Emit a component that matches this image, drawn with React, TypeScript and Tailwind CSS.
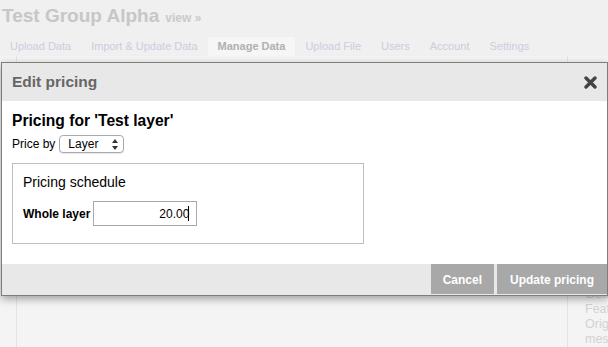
const tabs = [
  { label: "Upload Data", active: false },
  { label: "Import & Update Data", active: false },
  { label: "Manage Data", active: true },
  { label: "Upload File", active: false },
  { label: "Users", active: false },
  { label: "Account", active: false },
  { label: "Settings", active: false },
];

function PageBehind() {
  return (
    <div className="flex h-full flex-col bg-[#eff0ef]">
      <div className="flex items-baseline gap-[6px] pl-[2px] pt-[4px]">
        <h1 className="text-[19px] font-bold leading-[24px] text-[#c6c7c6]">Test Group Alpha</h1>
        <span className="text-[12px] font-bold text-[#c9cac9]">view »</span>
      </div>
      <div className="mt-[9px] flex h-[23px] items-stretch text-[11px]">
        {tabs.map((t) => (
          <div
            key={t.label}
            className={
              t.active
                ? "flex items-center bg-[#f5f6f5] px-[10px] font-bold text-[#b0b1b0]"
                : "flex items-center px-[10px] text-[#cdcde0]"
            }
          >
            {t.label}
          </div>
        ))}
      </div>
      <div className="flex flex-1 bg-[#f3f4f3]">
        <div className="w-[17px] border-r border-[#e2e3e2]" />
        <div className="flex-1 border-r border-[#e2e3e2]" />
        <div className="w-[40px] overflow-hidden pl-[17px] pt-[231px] text-[12.5px] leading-[15px] text-[#d2d3d2]">
          <div>Geometry</div>
          <div>Features</div>
          <div>Original</div>
          <div>meshes</div>
        </div>
      </div>
    </div>
  );
}

function EditPricingModal() {
  return (
    <div className="absolute left-[1px] top-[62px] w-[607px] border border-[#7d7d7d] bg-white shadow-[0_3px_8px_rgba(0,0,0,0.35)]">
      <div className="flex h-[38px] items-center justify-between bg-[#e8e8e8] pl-[10px] pr-[10px]">
        <span className="text-[15.5px] font-bold text-[#666]">Edit pricing</span>
        <svg width="13" height="13" viewBox="0 0 13 13">
          <path d="M2 2 L11 11 M11 2 L2 11" stroke="#444" strokeWidth="3.4" strokeLinecap="round" />
        </svg>
      </div>
      <div className="h-[163px] px-[10px] pt-[10px] text-black">
        <h2 className="text-[15.6px] font-bold leading-[20px]">Pricing for 'Test layer'</h2>
        <div className="mt-[4px] flex items-center gap-[4px] text-[12px]">
          <span>Price by</span>
          <div className="flex h-[18px] w-[65px] items-center justify-between rounded-[4px] border border-[#aaa] bg-white pl-[8px] pr-[5px] shadow-[0_1px_1px_rgba(0,0,0,0.1)]">
            <span>Layer</span>
            <svg width="6" height="11" viewBox="0 0 6 11">
              <path d="M3 0 L6 4 L0 4 Z M0 7 L6 7 L3 11 Z" fill="#333" />
            </svg>
          </div>
        </div>
        <div className="mt-[10px] h-[81px] w-[352px] border border-[#bdbdbd] px-[10px] pt-[9px]">
          <div className="text-[14px] leading-[18px]">Pricing schedule</div>
          <div className="mt-[10px] flex items-center gap-[3px]">
            <span className="text-[12px] font-bold">Whole layer</span>
            <div className="flex h-[25px] w-[104px] items-center justify-end border border-[#a9a9a9] pr-[7px] text-[12px]">
              20.00<span className="ml-[-1px] h-[15px] w-px bg-black" />
            </div>
          </div>
        </div>
      </div>
      <div className="flex h-[31px] justify-end gap-[3px] bg-[#e8e8e8] pb-px">
        <button className="bg-[#a8a8a8] px-[12px] pt-px text-[12px] font-bold text-white">Cancel</button>
        <button className="bg-[#a8a8a8] px-[13px] pt-px text-[12px] font-bold text-white">Update pricing</button>
      </div>
    </div>
  );
}

export default function App() {
  return (
    <div className="relative h-[347px] w-[608px] overflow-hidden font-['Liberation_Sans',Arial,sans-serif]">
      <PageBehind />
      <EditPricingModal />
    </div>
  );
}
